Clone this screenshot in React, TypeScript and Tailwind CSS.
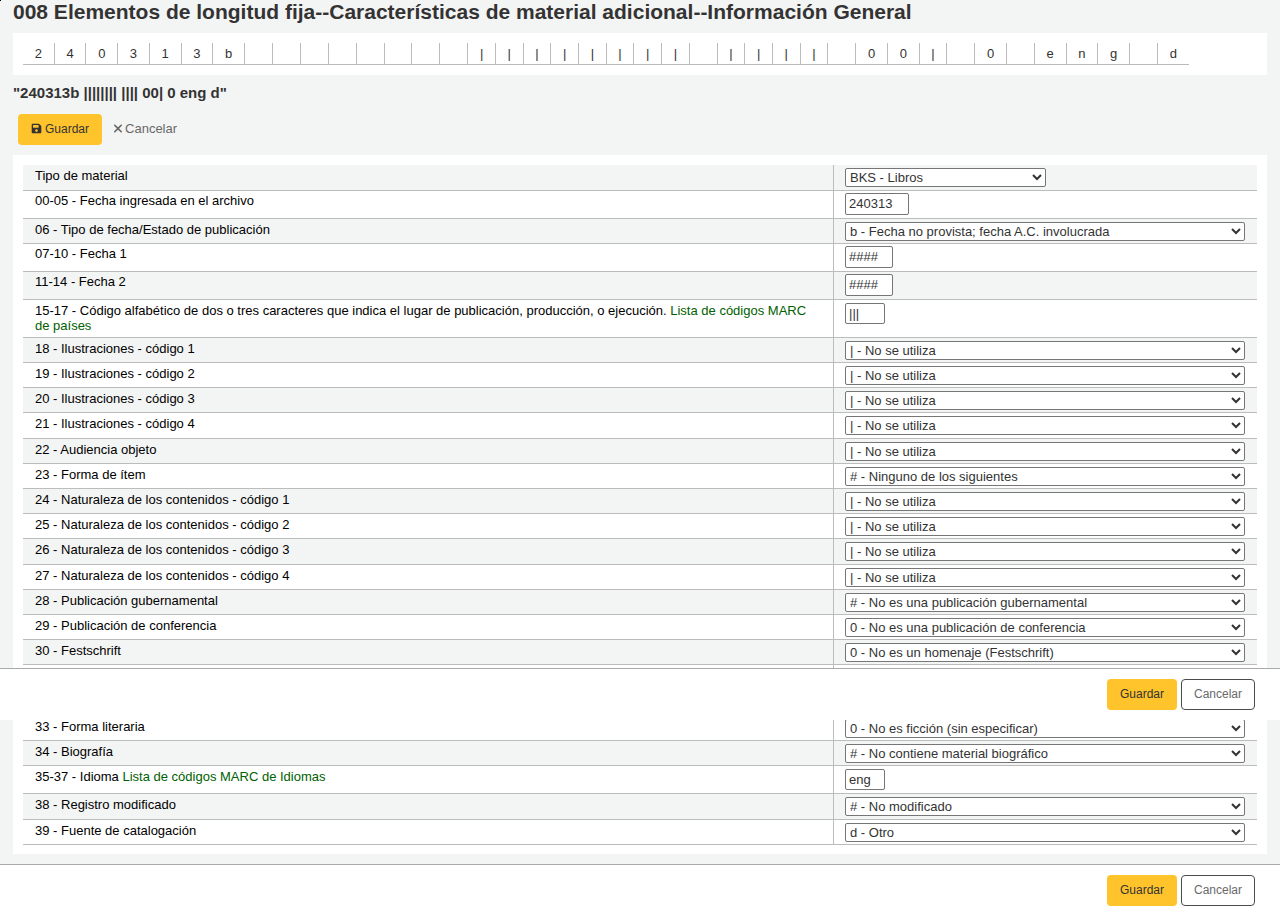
import React, { useState } from 'react';
import { FaSave } from 'react-icons/fa';
import { FaXmark } from 'react-icons/fa6';

type Field = {
  id: string;
  label: string;
  value: string;
  kind: 'select' | 'text';
  width?: string;
  maxLength?: number;
  link?: string;
  rowClass?: string;
};

const UNUSED = '| - No se utiliza';

const positions = '240313b        |||||||| ||||' + ' 00| 0 eng d';

const fields: Field[] = [
  { id: 'material', label: 'Tipo de material', value: 'BKS - Libros', kind: 'select', width: 'w-[201px]' },
  { id: 'f00', label: '00-05 - Fecha ingresada en el archivo', value: '240313', kind: 'text', width: 'w-16', maxLength: 6 },
  { id: 'f06', label: '06 - Tipo de fecha/Estado de publicación', value: 'b - Fecha no provista; fecha A.C. involucrada', kind: 'select' },
  { id: 'f07', label: '07-10 - Fecha 1', value: '####', kind: 'text', width: 'w-12', maxLength: 4 },
  { id: 'f11', label: '11-14 - Fecha 2', value: '####', kind: 'text', width: 'w-12', maxLength: 4 },
  {
    id: 'f15',
    label: '15-17 - Código alfabético de dos o tres caracteres que indica el lugar de publicación, producción, o ejecución.',
    value: '|||',
    kind: 'text',
    width: 'w-10',
    maxLength: 3,
    link: 'Lista de códigos MARC de países',
    rowClass: 'h-[38px]',
  },
  { id: 'f18', label: '18 - Ilustraciones - código 1', value: UNUSED, kind: 'select' },
  { id: 'f19', label: '19 - Ilustraciones - código 2', value: UNUSED, kind: 'select' },
  { id: 'f20', label: '20 - Ilustraciones - código 3', value: UNUSED, kind: 'select' },
  { id: 'f21', label: '21 - Ilustraciones - código 4', value: UNUSED, kind: 'select' },
  { id: 'f22', label: '22 - Audiencia objeto', value: UNUSED, kind: 'select' },
  { id: 'f23', label: '23 - Forma de ítem', value: '# - Ninguno de los siguientes', kind: 'select' },
  { id: 'f24', label: '24 - Naturaleza de los contenidos - código 1', value: UNUSED, kind: 'select' },
  { id: 'f25', label: '25 - Naturaleza de los contenidos - código 2', value: UNUSED, kind: 'select' },
  { id: 'f26', label: '26 - Naturaleza de los contenidos - código 3', value: UNUSED, kind: 'select' },
  { id: 'f27', label: '27 - Naturaleza de los contenidos - código 4', value: UNUSED, kind: 'select' },
  { id: 'f28', label: '28 - Publicación gubernamental', value: '# - No es una publicación gubernamental', kind: 'select' },
  { id: 'f29', label: '29 - Publicación de conferencia', value: '0 - No es una publicación de conferencia', kind: 'select' },
  { id: 'f30', label: '30 - Festschrift', value: '0 - No es un homenaje (Festschrift)', kind: 'select' },
  { id: 'f31', label: '31 - Índice', value: '0 - Sin índice', kind: 'select' },
  { id: 'f32', label: '32 - No definido', value: '# - No definido', kind: 'select' },
  { id: 'f33', label: '33 - Forma literaria', value: '0 - No es ficción (sin especificar)', kind: 'select' },
  { id: 'f34', label: '34 - Biografía', value: '# - No contiene material biográfico', kind: 'select' },
  { id: 'f35', label: '35-37 - Idioma', value: 'eng', kind: 'text', width: 'w-10', maxLength: 3, link: 'Lista de códigos MARC de Idiomas' },
  { id: 'f38', label: '38 - Registro modificado', value: '# - No modificado', kind: 'select' },
  { id: 'f39', label: '39 - Fuente de catalogación', value: 'd - Otro', kind: 'select' },
];

const FieldRow: React.FC<{ field: Field }> = ({ field }) => {
  const [value, setValue] = useState(field.value);

  let pad = 'pt-[2px] pb-[3px]';
  if (field.kind === 'select') pad = 'pt-[3px] pb-[2px] group-first:pb-[3px]';
  if (field.link) pad = 'py-[3px]';

  return (
    <tr className={`group odd:bg-[#f3f4f4] nth-[5n]:h-[26px] ${field.rowClass || ''}`}>
      <td className={`w-full border-r border-b border-[#bcbcbc] px-3 align-top text-black ${pad}`}>
        <label htmlFor={field.id}>{field.label}</label>
        {field.link && (
          <>
            {' '}
            <a href="#" className="text-[#006100] hover:underline">{field.link}</a>
          </>
        )}
      </td>
      <td className={`border-b border-[#bcbcbc] pr-3 pl-[11px] align-top ${pad}`}>
        {field.kind === 'select' ? (
          <select
            id={field.id}
            value={value}
            onChange={e => setValue(e.target.value)}
            className={`block h-[19px] rounded-[2px] border border-[#767676] bg-white text-[13px] text-[#333] ${field.width || 'w-[400px]'}`}
          >
            <option>{field.value}</option>
          </select>
        ) : (
          <input
            id={field.id}
            type="text"
            value={value}
            maxLength={field.maxLength}
            onChange={e => setValue(e.target.value)}
            className={`block rounded-[2px] border border-[#767676] bg-white px-[3px] text-[13px] text-[#333] ${field.link ? 'h-[21px]' : 'h-[22px] pb-[2px]'} ${field.width}`}
          />
        )}
      </td>
    </tr>
  );
};

const ActionBar: React.FC<{ className?: string }> = ({ className = '' }) => (
  <div className={`flex justify-end gap-1 border-t border-[#a9a9a9] bg-white pt-2.5 pr-[25px] pb-2.5 text-xs ${className}`}>
    <button type="button" className="h-[31px] w-[70px] rounded-[4px] bg-[#ffc32b] pb-[2px] text-[#333]">
      Guardar
    </button>
    <button type="button" className="h-[31px] w-[74px] rounded-[4px] border border-[#4a4d50] bg-white pb-[2px] text-[#696969]">
      Cancelar
    </button>
  </div>
);

export default function App() {
  return (
    <div className="relative bg-[#f3f4f4] font-['Liberation_Sans',Arial,sans-serif] text-[13px] leading-[15px] text-[#333]">
      <span className="absolute top-0 left-0 size-px bg-black" />
      <main className="px-[13px] pb-2.5">
        <h1 className="mb-2.5 text-[21px] leading-[23px] font-bold">
          008 Elementos de longitud fija--Características de material adicional--Información General
        </h1>

        <div className="bg-white p-2.5">
          <table className="w-[1166px] border-separate border-spacing-0">
            <tbody>
              <tr>
                {positions.split('').map((char, idx) => (
                  <td
                    key={idx}
                    className="border-r border-b border-[#bcbcbc] px-[11px] py-[3px] text-center last:border-r-0"
                  >
                    {char === ' ' ? '\u00a0' : char}
                  </td>
                ))}
              </tr>
            </tbody>
          </table>
        </div>

        <h2 className="mt-[9px] mb-[13px] text-[15px] leading-[17px] font-bold">
          &quot;240313b |||||||| |||| 00| 0 eng d&quot;
        </h2>

        <div className="mb-2.5 ml-[5px] flex items-center gap-[11px]">
          <button
            type="button"
            className="flex h-[31px] items-center gap-[3px] rounded-[4px] bg-[#ffc32b] px-[13px] pb-[2px] text-xs text-[#333]"
          >
            <FaSave size={11} />
            Guardar
          </button>
          <a href="#" className="flex items-center gap-[2px] pb-[2px] text-[#696969]">
            <FaXmark className="h-[13px] w-[10px]" />
            Cancelar
          </a>
        </div>

        <div className="bg-white px-2.5 pt-2.5 pb-[9px]">
          <table className="w-full border-separate border-spacing-0">
            <tbody>
              {fields.map(field => (
                <FieldRow key={field.id} field={field} />
              ))}
            </tbody>
          </table>
        </div>
      </main>

      {/* floating copy of the actions, sits over the form */}
      <ActionBar className="absolute inset-x-0 top-[668px]" />
      <ActionBar />
    </div>
  );
}
